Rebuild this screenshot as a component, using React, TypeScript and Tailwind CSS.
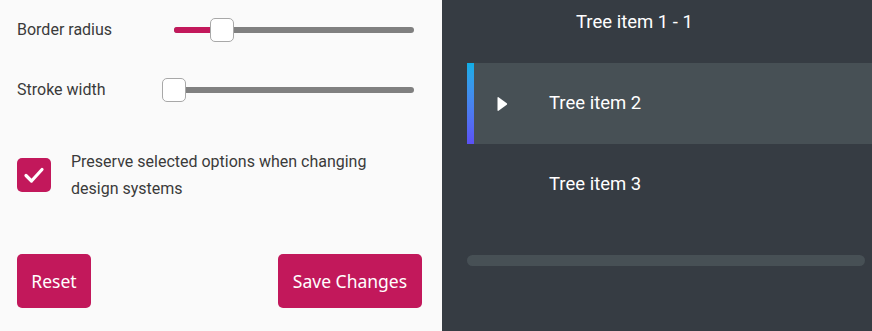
import React from 'react';

const Slider = ({ value }: { value: number }) => {
  return (
    <div className="relative h-6 flex-1 flex items-center">
      <div className="h-[6px] w-full rounded-full bg-[#808080]" />
      <div
        className="absolute left-0 h-[6px] rounded-full bg-[#c2185b]"
        style={{ width: `${value}%` }}
      />
      <div
        className="absolute top-0 w-6 h-6 -ml-3 rounded-[5px] border border-[#a8a8a8] bg-white"
        style={{ left: `${value}%` }}
      />
    </div>
  );
};

const TreeRow = ({ label, active }: { label: string; active?: boolean }) => (
  <div className={`flex h-[81px] items-center ${active ? 'bg-[#475055]' : ''}`}>
    <div
      className={`h-full w-[7px] ${active ? 'bg-gradient-to-b from-[#0eaee6] to-[#5b50f5]' : ''}`}
    />
    <div className="w-[75px] flex items-center pl-[23px]">
      {active && (
        <svg width="11" height="16" viewBox="0 0 11 16">
          <path d="M1.5 1.2 L9.8 7.2 Q10.6 8 9.8 8.8 L1.5 14.8 Q0.5 15.3 0.5 14 L0.5 2 Q0.5 0.7 1.5 1.2 Z" fill="#ffffff" />
        </svg>
      )}
    </div>
    <span className="text-[18.5px] text-white">{label}</span>
  </div>
);

export default function App() {
  return (
    <div className="flex h-[331px] w-[872px] font-['Roboto',sans-serif]">
      <div className="w-[442px] bg-[#fafafa] pl-[17px] pr-[28px]">
        <div className="flex items-center h-6 mt-[18px]">
          <span className="w-[157px] text-[16px] text-[#3a3a3a]">Border radius</span>
          <Slider value={20} />
        </div>
        <div className="flex items-center h-6 mt-[36px]">
          <span className="w-[157px] text-[16px] text-[#3a3a3a]">Stroke width</span>
          <Slider value={0} />
        </div>
        <div className="flex items-start mt-[46px]">
          <div className="mt-[10px] w-[34px] h-[34px] rounded-[5px] bg-[#c2185b] flex items-center justify-center">
            <svg width="22" height="22" viewBox="0 0 22 22">
              <path d="M3 11.5 L8.5 17 L19 5.5" fill="none" stroke="#ffffff" strokeWidth="3.2" strokeLinecap="round" strokeLinejoin="round" />
            </svg>
          </div>
          <p className="ml-[20px] text-[16px] leading-[27px] text-[#3a3a3a]">
            Preserve selected options when changing
            <br />
            design systems
          </p>
        </div>
        <div className="flex justify-between mt-[52px] font-['Segoe_UI','Noto_Sans',sans-serif]">
          <button className="h-[54px] w-[74px] rounded-[5px] bg-[#c2185b] text-[17.5px] text-white">
            Reset
          </button>
          <button className="h-[54px] w-[144px] -mr-[8px] rounded-[5px] bg-[#c2185b] text-[17.5px] text-white">
            Save Changes
          </button>
        </div>
      </div>
      <div className="flex-1 bg-[#363c43] pl-[25px]">
        <div className="h-[46px] flex items-center pl-[109px]">
          <span className="text-[18.5px] text-white">Tree item 1 - 1</span>
        </div>
        <div className="mt-[17px]">
          <TreeRow label="Tree item 2" active />
          <TreeRow label="Tree item 3" />
        </div>
        <div className="mt-[30px] mr-[7px] h-[11px] rounded-full bg-[#475055]" />
      </div>
    </div>
  );
}
